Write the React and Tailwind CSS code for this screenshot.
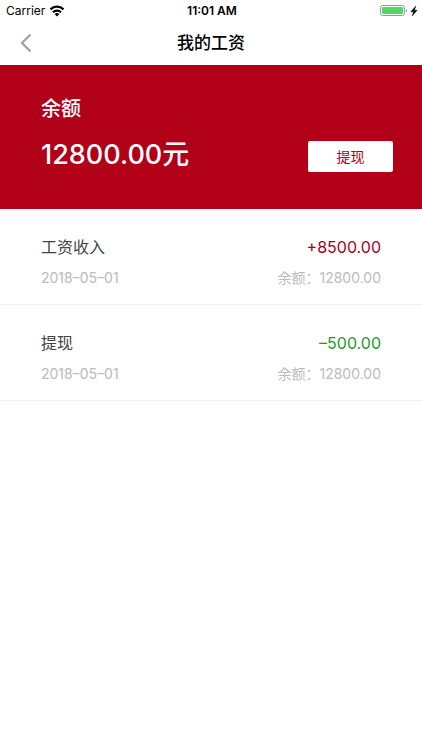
import React from 'react';

const records = [
  { id: 1, title: '工资收入', amount: '+8500.00', income: true, date: '2018–05–01', balance: '12800.00' },
  { id: 2, title: '提现', amount: '–500.00', income: false, date: '2018–05–01', balance: '12800.00' }
];

const StatusBar = () => (
  <div className="grid h-5 grid-cols-3 items-center pt-0.5 pl-1.5 pr-1 text-xs text-black">
    <div className="flex items-center gap-1">
      <span>Carrier</span>
      <svg className="h-3 w-4" viewBox="0 0 16 12" fill="none" stroke="#000" strokeWidth="2.2">
        <path d="M1.5 4.4a9.2 9.2 0 0 1 13 0" />
        <path d="M4 7.2a5.7 5.7 0 0 1 8 0" />
        <path d="M8 11.5 5.6 9.1a3.4 3.4 0 0 1 4.8 0z" fill="#000" stroke="none" />
      </svg>
    </div>
    <span className="text-center font-semibold whitespace-nowrap">11:01 AM</span>
    <div className="flex items-center justify-end gap-0.5">
      <svg className="h-3 w-7" viewBox="0 0 28 12">
        <rect x="0.5" y="0.5" width="24" height="10" rx="2" fill="#fff" stroke="#999" />
        <rect x="2" y="2" width="21" height="7" rx="1" fill="#4cd964" />
        <path d="M26 4v3.5a2 2 0 0 0 0-3.5z" fill="#999" />
      </svg>
      <svg className="h-2.5 w-2" viewBox="0 0 8 10">
        <path d="M5.8 0 .8 5.8h2.7L2.2 10 7.2 4.2H4.5z" fill="#000" stroke="#000" strokeWidth="0.4" />
      </svg>
    </div>
  </div>
);

const NavBar = ({ title }) => (
  <header className="grid h-[45px] grid-cols-[1fr_auto_1fr] items-center px-5 pt-0.5">
    <button type="button" aria-label="返回" className="justify-self-start pb-0.5">
      <svg className="h-5 w-3" viewBox="0 0 12 20" fill="none" stroke="#a0a0a0" strokeWidth="2.2">
        <path d="M10.5 1.5 2 10l8.5 8.5" />
      </svg>
    </button>
    <h1 className="text-[17px] font-medium text-black">{title}</h1>
  </header>
);

const RecordItem = ({ record }) => (
  <li className="flex h-24 flex-col gap-[7px] border-b border-[#efefef] px-[41px] pt-[26px]">
    <div className="flex items-center justify-between text-base leading-6">
      <span className="text-[#444]">{record.title}</span>
      <span className={record.income ? 'text-[#a8001c]' : 'text-[#1f9a2e]'}>{record.amount}</span>
    </div>
    <div className="flex items-center justify-between text-sm leading-6 text-[#bbb]">
      <time>{record.date}</time>
      <span>余额：{record.balance}</span>
    </div>
  </li>
);

const App = () => {
  return (
    <div className="min-h-screen bg-white font-['Inter','Noto_Sans_CJK_SC',sans-serif]">
      <StatusBar />
      <NavBar title="我的工资" />

      <section className="flex h-36 items-end justify-between bg-[#b20019] pr-[29px] pb-[37px] pl-[41px] text-white">
        <div>
          <p className="text-xl leading-8 font-medium">余额</p>
          <p className="mt-[13px] text-[27px] leading-[34px] font-medium">12800.00元</p>
        </div>
        <button type="button" className="h-[31px] w-[85px] rounded-xs bg-white text-sm text-[#b20019]">
          提现
        </button>
      </section>

      <ul>
        {records.map((record) => (
          <RecordItem key={record.id} record={record} />
        ))}
      </ul>
    </div>
  );
};

export default App;
